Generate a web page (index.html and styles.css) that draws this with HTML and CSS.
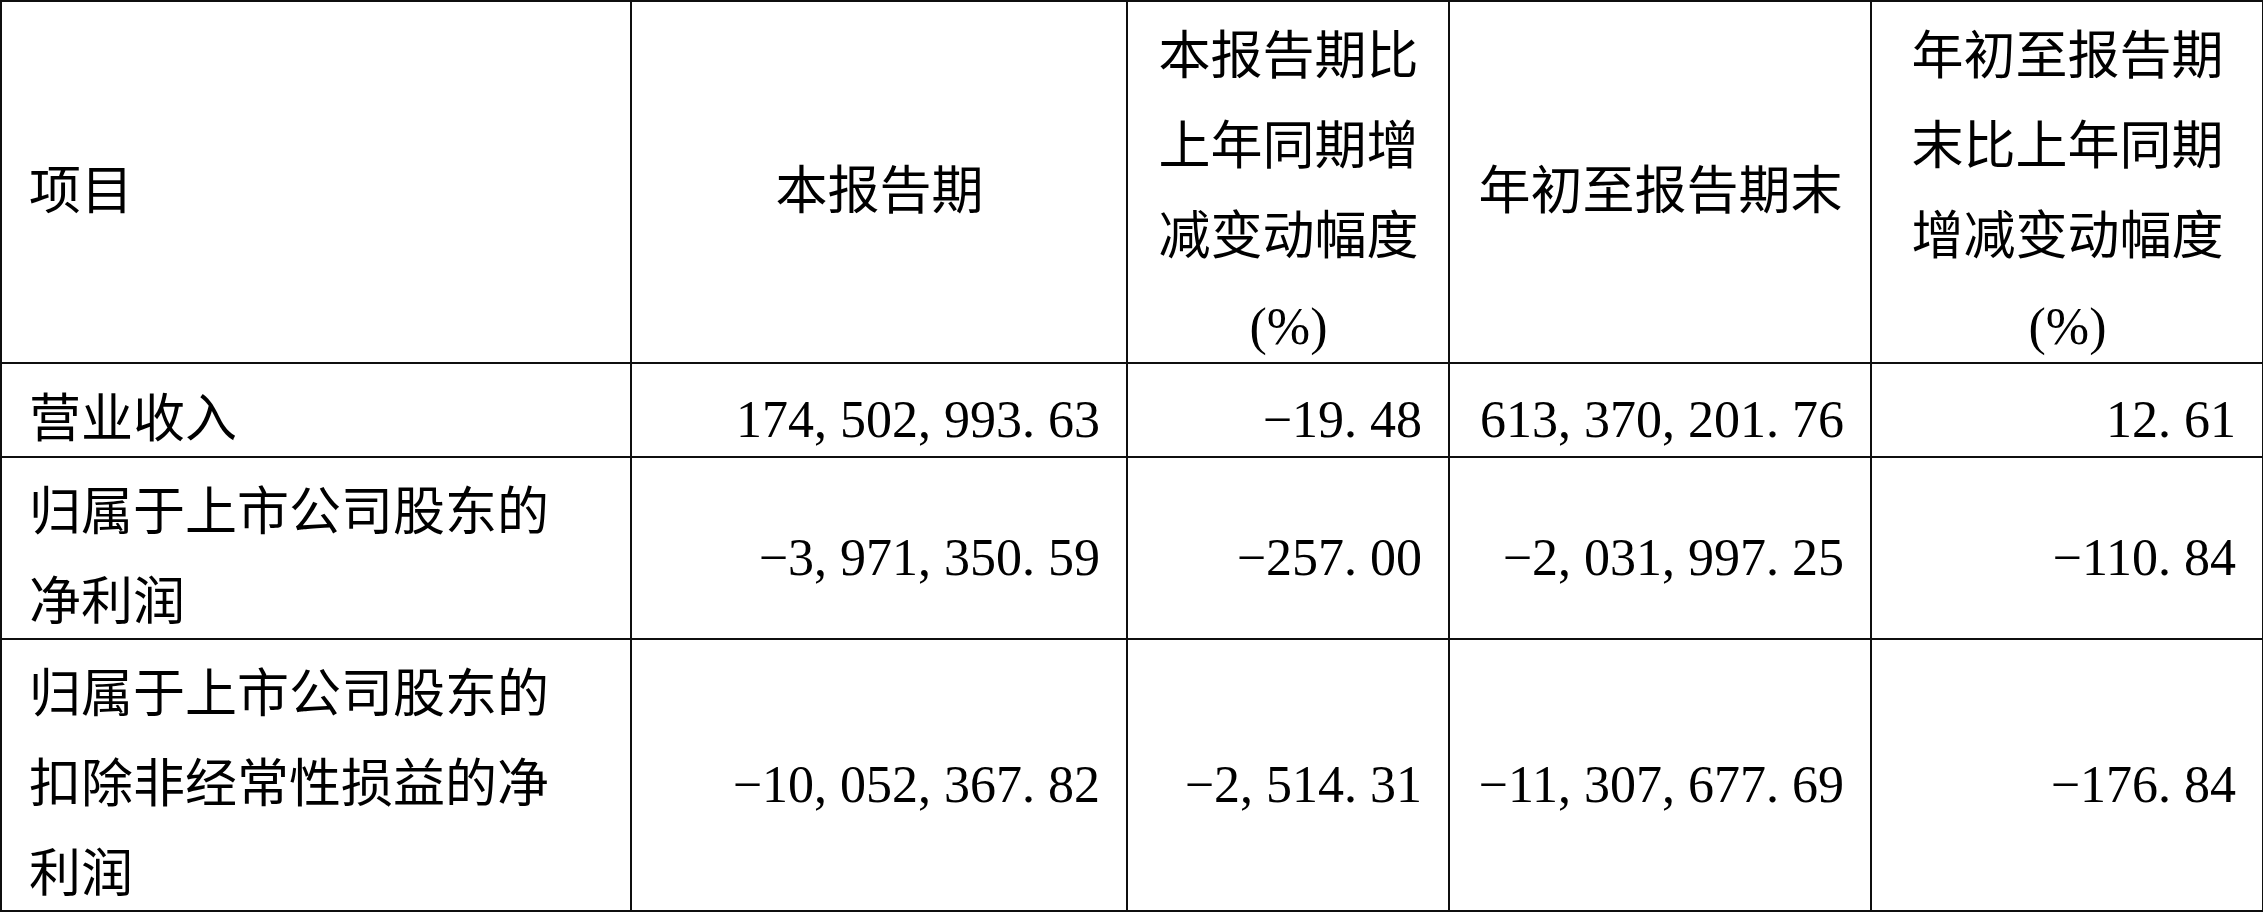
FILE: index.html
```html
<!DOCTYPE html>
<html lang="zh-CN">
<head>
<meta charset="utf-8">
<title>主要会计数据</title>
<link rel="stylesheet" href="styles.css">
</head>
<body>
<table class="grid">
  <colgroup>
    <col class="c1"><col class="c2"><col class="c3"><col class="c4"><col class="c5">
  </colgroup>
  <tr class="head">
    <td class="txt"><span class="tx">项目</span></td>
    <td class="ctr"><span class="tx">本报告期</span></td>
    <td class="ctr"><span class="tx">本报告期比<br>上年同期增<br>减变动幅度<br>(%)</span></td>
    <td class="ctr"><span class="tx">年初至报告期末</span></td>
    <td class="ctr"><span class="tx">年初至报告期<br>末比上年同期<br>增减变动幅度<br>(%)</span></td>
  </tr>
  <tr class="r1">
    <td class="txt"><span class="tx">营业收入</span></td>
    <td class="num"><span class="tx">174<span class="p">,</span>502<span class="p">,</span>993<span class="p">.</span>63</span></td>
    <td class="num"><span class="tx">−19<span class="p">.</span>48</span></td>
    <td class="num"><span class="tx">613<span class="p">,</span>370<span class="p">,</span>201<span class="p">.</span>76</span></td>
    <td class="num"><span class="tx">12<span class="p">.</span>61</span></td>
  </tr>
  <tr>
    <td class="txt"><span class="tx">归属于上市公司股东的<br>净利润</span></td>
    <td class="num"><span class="tx">−3<span class="p">,</span>971<span class="p">,</span>350<span class="p">.</span>59</span></td>
    <td class="num"><span class="tx">−257<span class="p">.</span>00</span></td>
    <td class="num"><span class="tx">−2<span class="p">,</span>031<span class="p">,</span>997<span class="p">.</span>25</span></td>
    <td class="num"><span class="tx">−110<span class="p">.</span>84</span></td>
  </tr>
  <tr>
    <td class="txt"><span class="tx">归属于上市公司股东的<br>扣除非经常性损益的净<br>利润</span></td>
    <td class="num"><span class="tx">−10<span class="p">,</span>052<span class="p">,</span>367<span class="p">.</span>82</span></td>
    <td class="num"><span class="tx">−2<span class="p">,</span>514<span class="p">.</span>31</span></td>
    <td class="num"><span class="tx">−11<span class="p">,</span>307<span class="p">,</span>677<span class="p">.</span>69</span></td>
    <td class="num"><span class="tx">−176<span class="p">.</span>84</span></td>
  </tr>
</table>
</body>
</html>
```
FILE: styles.css
```css
html, body {
  margin: 0;
  padding: 0;
  background: #ffffff;
}

.grid {
  border-collapse: collapse;
  table-layout: fixed;
  width: 2264px;
  color: #000000;
  font-family: "Liberation Serif", "Noto Sans CJK SC", serif;
  font-size: 52px;
  font-weight: 400;
}

.c1 { width: 630px; }
.c2 { width: 496px; }
.c3 { width: 322px; }
.c4 { width: 422px; }
.c5 { width: 392px; }

.grid td {
  border: 2px solid #0f0f0f;
  padding: 0 26px 0 27px;
  line-height: 90px;
  vertical-align: middle;
  white-space: nowrap;
}

.r1 td {
  height: 92px;
}

.txt { text-align: left; }
.ctr { text-align: center; }
.num { text-align: right; }

.tx {
  line-height: 52px;
  vertical-align: -10px;
}

.p {
  letter-spacing: 0.25em;
}
```
